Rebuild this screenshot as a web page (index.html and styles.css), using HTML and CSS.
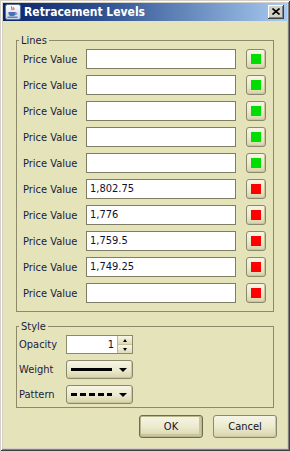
FILE: index.html
```html
<!DOCTYPE html>
<html>
<head>
<meta charset="utf-8">
<link rel="stylesheet" href="styles.css">
</head>
<body>
<div class="window">
  <div class="titlebar">
    <svg class="app-icon" width="16" height="16" viewBox="0 0 16 16">
      <defs>
        <linearGradient id="ig" x1="0" y1="0" x2="0" y2="1">
          <stop offset="0" stop-color="#ffffff"/>
          <stop offset="1" stop-color="#c9d3e3"/>
        </linearGradient>
      </defs>
      <rect x="0.5" y="0.5" width="15" height="15" rx="2" fill="url(#ig)" stroke="#5a6e96"/>
      <path d="M7 2.5c-1.5 1.2 1 2-0.3 3.6M9 3.5c-1 0.8 0.6 1.4-0.4 2.4" stroke="#e0501c" stroke-width="1.1" fill="none"/>
      <path d="M3.5 8h7v1.6c0 1.6-1.4 2.6-3.5 2.6s-3.5-1-3.5-2.6z" fill="#4a6fb5"/>
      <path d="M10.5 8.6c1.6 0 1.6 2-0.2 2" stroke="#4a6fb5" stroke-width="1" fill="none"/>
      <path d="M2.5 13.2h10" stroke="#4a6fb5" stroke-width="1.2"/>
    </svg>
    <span class="title">Retracement Levels</span>
    <div class="close-btn">
      <svg width="8" height="7" viewBox="0 0 8 7"><path d="M0.5 0.5l7 6M7.5 0.5l-7 6" stroke="#000" stroke-width="1.6"/></svg>
    </div>
  </div>
  <div class="content">
    <fieldset class="group lines">
      <legend>Lines</legend>
      <div class="rows">
        <div class="row"><span class="label">Price Value</span><div class="field"></div><div class="btn swatch-btn"><span class="swatch green"></span></div></div>
        <div class="row"><span class="label">Price Value</span><div class="field"></div><div class="btn swatch-btn"><span class="swatch green"></span></div></div>
        <div class="row"><span class="label">Price Value</span><div class="field"></div><div class="btn swatch-btn"><span class="swatch green"></span></div></div>
        <div class="row"><span class="label">Price Value</span><div class="field"></div><div class="btn swatch-btn"><span class="swatch green"></span></div></div>
        <div class="row"><span class="label">Price Value</span><div class="field"></div><div class="btn swatch-btn"><span class="swatch green"></span></div></div>
        <div class="row"><span class="label">Price Value</span><div class="field">1,802.75</div><div class="btn swatch-btn"><span class="swatch red"></span></div></div>
        <div class="row"><span class="label">Price Value</span><div class="field">1,776</div><div class="btn swatch-btn"><span class="swatch red"></span></div></div>
        <div class="row"><span class="label">Price Value</span><div class="field">1,759.5</div><div class="btn swatch-btn"><span class="swatch red"></span></div></div>
        <div class="row"><span class="label">Price Value</span><div class="field">1,749.25</div><div class="btn swatch-btn"><span class="swatch red"></span></div></div>
        <div class="row"><span class="label">Price Value</span><div class="field"></div><div class="btn swatch-btn"><span class="swatch red"></span></div></div>
      </div>
    </fieldset>
    <fieldset class="group style">
      <legend>Style</legend>
      <div class="rows style-rows">
        <div class="srow"><span class="slabel">Opacity</span>
          <div class="spinner">
            <div class="spin-field">1</div>
            <div class="spin-btns">
              <div class="spin-btn"><span class="tri-up"></span></div>
              <div class="spin-btn"><span class="tri-down small"></span></div>
            </div>
          </div>
        </div>
        <div class="srow"><span class="slabel">Weight</span>
          <div class="btn combo"><span class="line solid"></span><span class="tri-down"></span></div>
        </div>
        <div class="srow"><span class="slabel">Pattern</span>
          <div class="btn combo"><span class="line dashed"></span><span class="tri-down"></span></div>
        </div>
      </div>
    </fieldset>
    <div class="actions">
      <div class="btn push ok">OK</div>
      <div class="btn push">Cancel</div>
    </div>
  </div>
</div>
</body>
</html>
```
FILE: styles.css
```css
html, body {
  margin: 0;
  padding: 0;
  background: #e5e3ba;
}
body {
  font-family: "DejaVu Sans Condensed", "Liberation Sans", sans-serif;
  font-size: 11px;
  color: #1b1b40;
}
.window {
  width: 290px;
  height: 451px;
  box-sizing: border-box;
  padding: 3px;
  background: #e5e3ba;
  display: flex;
  flex-direction: column;
  box-shadow: inset 1px 1px 0 #d4d0c8, inset -1px -1px 0 #404040,
              inset 2px 2px 0 #ffffff, inset -2px -2px 0 #808080,
              inset 3px 3px 0 #d4d0c8, inset -3px -3px 0 #d4d0c8;
}
.titlebar {
  height: 18px;
  flex: none;
  display: flex;
  align-items: center;
  padding-left: 2px;
  background: linear-gradient(90deg, #0a246a 0%, #2f5190 35%, #a6caf0 100%);
}
.app-icon {
  flex: none;
  display: block;
}
.title {
  margin-left: 3px;
  color: #fff;
  font-weight: bold;
  font-size: 12px;
  line-height: 14px;
}
.close-btn {
  margin-left: auto;
  margin-right: 3px;
  width: 16px;
  height: 14px;
  box-sizing: border-box;
  background: #d4d0c8;
  display: flex;
  align-items: center;
  justify-content: center;
  box-shadow: inset -1px -1px 0 #404040, inset 1px 1px 0 #ffffff,
              inset -2px -2px 0 #808080;
}
.close-btn svg { display: block; margin-top: -1px; }
.content {
  flex: 1;
  display: flex;
  flex-direction: column;
  padding: 13px 10px 0 13px;
}
.group {
  margin: 0 3px 0 0;
  border: 1px solid #8c8a6a;
  min-width: 0;
}
.group legend {
  padding: 0 2px;
  font-size: 11px;
  line-height: 13px;
}
.lines {
  padding: 2px 7px 8px 2px;
}
.style {
  margin-top: 8px;
  padding: 2px 7px 3px 2px;
}
.rows {
  display: flex;
  flex-direction: column;
  gap: 6px;
  padding-left: 4px;
}
.row {
  display: flex;
  align-items: center;
  height: 20px;
}
.label {
  width: 63px;
  flex: none;
  white-space: nowrap;
}
.field {
  flex: 1;
  height: 20px;
  box-sizing: border-box;
  background: #fff;
  border: 1px solid #7f7d63;
  padding: 0 3px;
  line-height: 18px;
  color: #101030;
}
.btn {
  box-sizing: border-box;
  border: 1px solid #8b896b;
  border-radius: 3px;
  background: linear-gradient(180deg, #f6f5e6 0%, #ebe9cc 55%, #d6d3ab 100%);
  box-shadow: inset -1px -1px 0 #c9c69d;
}
.swatch-btn {
  margin-left: 10px;
  width: 20px;
  height: 20px;
  flex: none;
  display: flex;
  align-items: center;
  justify-content: center;
}
.swatch {
  width: 10px;
  height: 10px;
  display: block;
}
.swatch.green { background: #00dd00; }
.swatch.red { background: #ff0000; }
.style-rows {
  padding-left: 0;
}
.srow {
  display: flex;
  align-items: center;
  height: 19px;
}
.slabel {
  width: 47px;
  flex: none;
}
.spinner {
  width: 67px;
  height: 19px;
  display: flex;
  box-sizing: border-box;
  border: 1px solid #8b896b;
  background: #fff;
}
.spin-field {
  flex: 1;
  text-align: right;
  padding-right: 3px;
  line-height: 17px;
  color: #101030;
}
.spin-btns {
  width: 14px;
  display: flex;
  flex-direction: column;
  border-left: 1px solid #b9b795;
}
.spin-btn {
  flex: 1;
  display: flex;
  align-items: center;
  justify-content: center;
  background: linear-gradient(180deg, #f7f6e8, #dedbb6);
}
.spin-btn + .spin-btn { border-top: 1px solid #c6c39c; }
.tri-up {
  width: 0;
  height: 0;
  border-left: 2.5px solid transparent;
  border-right: 2.5px solid transparent;
  border-bottom: 3px solid #000;
}
.tri-down {
  width: 0;
  height: 0;
  border-left: 4px solid transparent;
  border-right: 4px solid transparent;
  border-top: 4px solid #000;
}
.tri-down.small {
  border-left-width: 2.5px;
  border-right-width: 2.5px;
  border-top-width: 3px;
}
.combo {
  width: 67px;
  height: 19px;
  display: flex;
  align-items: center;
  padding: 0 5px 0 4px;
}
.combo .line {
  width: 41px;
  height: 3px;
  flex: none;
}
.combo .line.solid { background: #000; }
.combo .line.dashed {
  background: repeating-linear-gradient(90deg, #000 0 6px, transparent 6px 9px);
}
.combo .tri-down { margin-left: auto; }
.actions {
  display: flex;
  justify-content: flex-end;
  gap: 10px;
  margin-top: 7px;
}
.push {
  width: 64px;
  height: 23px;
  display: flex;
  align-items: center;
  justify-content: center;
  color: #101030;
}
.push.ok {
  border-color: #6e6c50;
  box-shadow: inset 0 0 0 1px #b8b68c, inset -1px -1px 0 2px #c9c69d;
}
```
